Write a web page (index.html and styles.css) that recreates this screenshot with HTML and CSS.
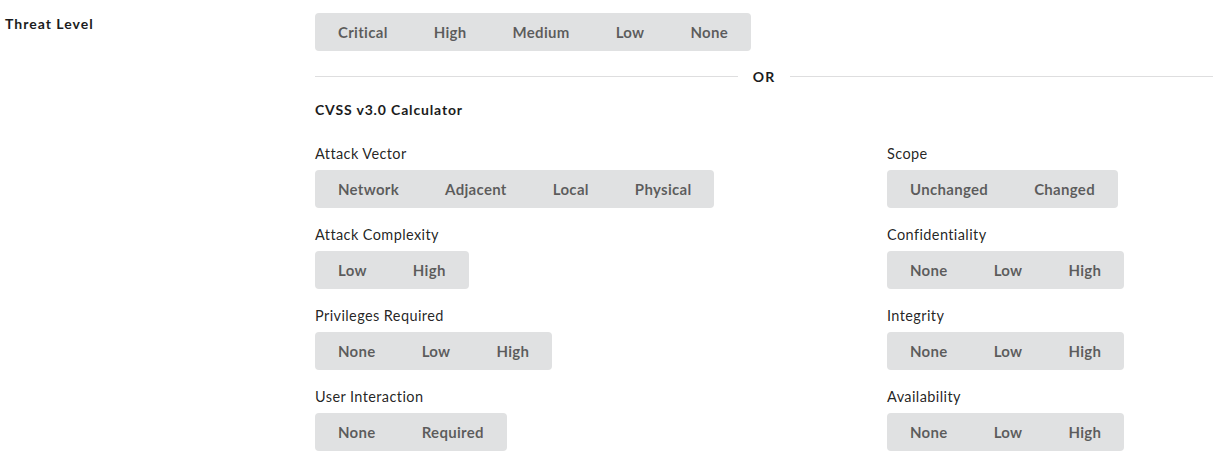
FILE: index.html
```html
<!DOCTYPE html>
<html>
<head>
<meta charset="utf-8">
<link rel="stylesheet" href="styles.css">
</head>
<body>
<div class="form">
  <div class="side-label">Threat Level</div>
  <div class="main">
    <div class="btn-group">
      <button class="btn">Critical</button>
      <button class="btn">High</button>
      <button class="btn">Medium</button>
      <button class="btn">Low</button>
      <button class="btn">None</button>
    </div>
    <div class="divider"><span class="line"></span><span class="or">OR</span><span class="line"></span></div>
    <div class="calc-title">CVSS v3.0 Calculator</div>
    <div class="calc">
      <div class="col">
        <div class="field">
          <div class="label">Attack Vector</div>
          <div class="btn-group">
            <button class="btn">Network</button>
            <button class="btn">Adjacent</button>
            <button class="btn">Local</button>
            <button class="btn">Physical</button>
          </div>
        </div>
        <div class="field">
          <div class="label">Attack Complexity</div>
          <div class="btn-group">
            <button class="btn">Low</button>
            <button class="btn">High</button>
          </div>
        </div>
        <div class="field">
          <div class="label">Privileges Required</div>
          <div class="btn-group">
            <button class="btn">None</button>
            <button class="btn">Low</button>
            <button class="btn">High</button>
          </div>
        </div>
        <div class="field">
          <div class="label">User Interaction</div>
          <div class="btn-group">
            <button class="btn">None</button>
            <button class="btn">Required</button>
          </div>
        </div>
      </div>
      <div class="col">
        <div class="field">
          <div class="label">Scope</div>
          <div class="btn-group">
            <button class="btn">Unchanged</button>
            <button class="btn">Changed</button>
          </div>
        </div>
        <div class="field">
          <div class="label">Confidentiality</div>
          <div class="btn-group">
            <button class="btn">None</button>
            <button class="btn">Low</button>
            <button class="btn">High</button>
          </div>
        </div>
        <div class="field">
          <div class="label">Integrity</div>
          <div class="btn-group">
            <button class="btn">None</button>
            <button class="btn">Low</button>
            <button class="btn">High</button>
          </div>
        </div>
        <div class="field">
          <div class="label">Availability</div>
          <div class="btn-group">
            <button class="btn">None</button>
            <button class="btn">Low</button>
            <button class="btn">High</button>
          </div>
        </div>
      </div>
    </div>
  </div>
</div>
</body>
</html>
```

FILE: styles.css
```css
html, body {
  margin: 0;
  padding: 0;
  background: #ffffff;
}
body {
  font-family: Lato, "Noto Sans", sans-serif;
  font-size: 15px;
  color: rgba(0, 0, 0, 0.87);
}
.form {
  display: flex;
  padding: 13px 5px 0 5px;
}
.side-label {
  width: 310px;
  flex: none;
  font-weight: 700;
  font-size: 14px;
  letter-spacing: 1px;
  padding-top: 2px;
  color: #1b1c1d;
}
.main {
  flex: 1;
  display: flex;
  flex-direction: column;
  align-items: flex-start;
}
.btn-group {
  display: inline-flex;
  background: #e0e1e2;
  border-radius: 4px;
}
.btn {
  font-family: Lato, "Noto Sans", sans-serif;
  font-size: 15px;
  font-weight: 700;
  line-height: 15px;
  letter-spacing: 0.3px;
  color: rgba(0, 0, 0, 0.6);
  background: transparent;
  border: 0;
  margin: 0;
  padding: 12px 23px 11px 23px;
  height: 38px;
  cursor: pointer;
}
.divider {
  align-self: stretch;
  display: flex;
  align-items: center;
  margin-top: 17px;
  height: 16px;
}
.divider .line {
  flex: 1;
  height: 1px;
  background: #dededf;
}
.divider .or {
  font-weight: 700;
  font-size: 14px;
  letter-spacing: 1.2px;
  padding: 0 15px;
  color: #1b1c1d;
}
.calc-title {
  margin-top: 17px;
  font-weight: 700;
  font-size: 14px;
  letter-spacing: 0.85px;
  color: #1b1c1d;
}
.calc {
  align-self: stretch;
  display: grid;
  grid-template-columns: 572px 1fr;
  margin-top: 27px;
}
.col {
  display: flex;
  flex-direction: column;
  gap: 18px;
}
.field {
  display: flex;
  flex-direction: column;
  align-items: flex-start;
  gap: 7px;
}
.label {
  font-size: 14.5px;
  line-height: 18px;
  letter-spacing: 0.4px;
  color: rgba(0, 0, 0, 0.87);
}
```
